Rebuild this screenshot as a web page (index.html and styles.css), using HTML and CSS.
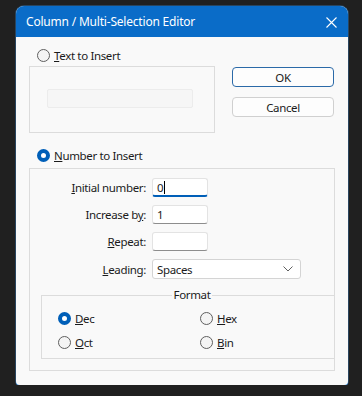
FILE: index.html
```html
<!DOCTYPE html>
<html lang="en">
<head>
    <meta charset="UTF-8">
    <title>Column / Multi-Selection Editor</title>
    <link rel="stylesheet" href="styles.css">
</head>
<body>
    <div class="window">
        <div class="titlebar">
            <span class="title">Column / Multi-Selection Editor</span>
            <svg class="close" width="11" height="11" viewBox="0 0 11 11">
                <path d="M0.5 0.5 L10.5 10.5 M10.5 0.5 L0.5 10.5" stroke="#fff" stroke-width="1.1" fill="none"/>
            </svg>
        </div>
        <div class="dialog">
            <div class="top">
                <div class="left-col">
                    <div class="radio">
                        <span class="dot"></span>
                        <span><u>T</u>ext to Insert</span>
                    </div>
                    <div class="group text-group">
                        <div class="text-box"></div>
                    </div>
                </div>
                <div class="buttons">
                    <div class="btn btn-default">OK</div>
                    <div class="btn">Cancel</div>
                </div>
            </div>

            <div class="radio number-radio">
                <span class="dot checked"></span>
                <span><u>N</u>umber to Insert</span>
            </div>
            <div class="group number-group">
                <div class="fields">
                    <span class="field-label"><u>I</u>nitial number:</span>
                    <div class="input focused">0<span class="caret"></span></div>
                    <span class="field-label">Increase b<u>y</u>:</span>
                    <div class="input">1</div>
                    <span class="field-label"><u>R</u>epeat:</span>
                    <div class="input"></div>
                    <span class="field-label"><u>L</u>eading:</span>
                    <div class="select">
                        <span>Spaces</span>
                        <svg width="10" height="6" viewBox="0 0 10 6">
                            <path d="M0.5 0.5 L5 5 L9.5 0.5" stroke="#606060" stroke-width="1" fill="none"/>
                        </svg>
                    </div>
                </div>
                <fieldset class="format">
                    <legend>Format</legend>
                    <div class="format-grid">
                        <div class="radio"><span class="dot checked"></span><span><u>D</u>ec</span></div>
                        <div class="radio"><span class="dot"></span><span><u>H</u>ex</span></div>
                        <div class="radio"><span class="dot"></span><span><u>O</u>ct</span></div>
                        <div class="radio"><span class="dot"></span><span><u>B</u>in</span></div>
                    </div>
                </fieldset>
            </div>
        </div>
    </div>
</body>
</html>
```

FILE: styles.css
```css
body {
    margin: 0;
    background-color: #202020;
    font-family: "Segoe UI", "Noto Sans", sans-serif;
    font-size: 11.5px;
    letter-spacing: -0.35px;
    color: #1b1b1b;
}

.window {
    margin: 6px 0 0 16px;
    width: 332px;
    height: 379px;
    border-radius: 8px 8px 4px 4px;
    background-color: #f9f9f9;
    box-shadow: 0 1px 0 #3a8cd8, 0 0 0 1px rgba(60, 140, 215, 0.35);
    overflow: hidden;
}

.titlebar {
    height: 31px;
    background-color: #0a6cc8;
    color: #fff;
    display: flex;
    align-items: center;
    justify-content: space-between;
    padding: 0 11px 0 10px;
    font-size: 12px;
    letter-spacing: -0.2px;
}

.close {
    margin-top: 1px;
}

.dialog {
    padding: 10px 0 0 13px;
}

.top {
    display: flex;
    gap: 17px;
}

.left-col {
    width: 186px;
}

.radio {
    display: flex;
    align-items: center;
    gap: 4px;
    height: 16px;
    margin-left: 8px;
}

.dot {
    width: 13px;
    height: 13px;
    box-sizing: border-box;
    border: 1px solid #5f5f5f;
    border-radius: 50%;
    background-color: #f4f4f4;
}

.dot.checked {
    border: 4px solid #005fb8;
    background-color: #fff;
}

.group {
    box-sizing: border-box;
    border: 1px solid #dcdcdc;
}

.text-group {
    margin-top: 3px;
    height: 67px;
    padding: 22px 0 0 17px;
}

.text-box {
    width: 146px;
    height: 19px;
    box-sizing: border-box;
    border: 1px solid #ececec;
    border-radius: 2px;
    background-color: #f6f6f6;
}

.buttons {
    padding-top: 20px;
    display: flex;
    flex-direction: column;
    gap: 10px;
}

.btn {
    width: 102px;
    height: 20px;
    box-sizing: border-box;
    border: 1px solid #d0d0d0;
    border-radius: 4px;
    background-color: #fdfdfd;
    display: flex;
    align-items: center;
    justify-content: center;
}

.btn-default {
    border-color: #2b6aa8;
}

.number-radio {
    margin-top: 14px;
}

.number-group {
    margin-top: 5px;
    width: 306px;
    height: 203px;
}

.fields {
    display: grid;
    grid-template-columns: 116px auto;
    grid-template-rows: 19px 19px 19px 20px;
    column-gap: 6px;
    row-gap: 8px;
    padding-top: 9px;
    align-items: center;
}

.field-label {
    text-align: right;
}

.input {
    width: 56px;
    height: 19px;
    box-sizing: border-box;
    border: 1px solid #e3e3e3;
    border-bottom-color: #8d8d8d;
    border-radius: 3px;
    background-color: #fff;
    padding-left: 4px;
    display: flex;
    align-items: center;
}

.input.focused {
    border-bottom: 2px solid #005fb8;
    padding-top: 1px;
}

.caret {
    width: 1px;
    height: 13px;
    background-color: #000;
    margin-left: 1px;
}

.select {
    width: 149px;
    height: 20px;
    box-sizing: border-box;
    border: 1px solid #d4d4d4;
    border-radius: 3px;
    background-color: #fff;
    padding: 0 7px 0 4px;
    display: flex;
    align-items: center;
    justify-content: space-between;
}

.format {
    margin: 8px 0 0 11px;
    width: 282px;
    height: 72px;
    box-sizing: border-box;
    border: 1px solid #dcdcdc;
    padding: 7px 0 0 8px;
}

.format legend {
    margin: 0 auto;
    padding: 0 2px;
    line-height: 16px;
}

.format-grid {
    display: grid;
    grid-template-columns: 142px 142px;
    row-gap: 8px;
}
```
